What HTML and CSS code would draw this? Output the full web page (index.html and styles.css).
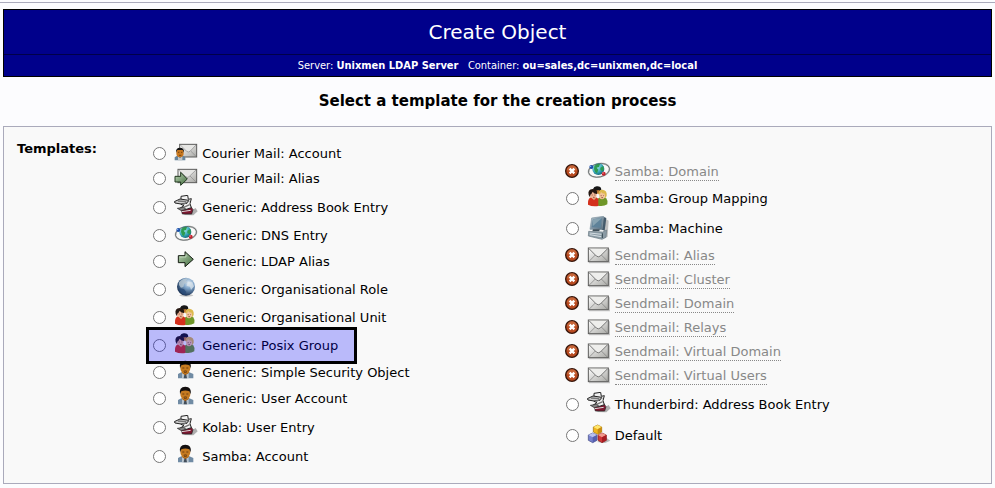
FILE: index.html
```html
<!DOCTYPE html>
<html lang="en">
<head>
  <meta charset="UTF-8" />
  <meta name="viewport" content="width=device-width, initial-scale=1.0"/>
  <title>Create Object</title>
  <link rel="stylesheet" href="styles.css">
</head>
<body>
  <!-- icon set -->
  <svg class="sprite" aria-hidden="true">
    <defs>
      <linearGradient id="paper" x1="0" y1="0" x2="1" y2="1">
        <stop offset="0" stop-color="#ffffff"/><stop offset="1" stop-color="#a8a8a4"/>
      </linearGradient>
      <linearGradient id="green" x1="0" y1="0" x2="1" y2="1">
        <stop offset="0" stop-color="#c0d8b8"/><stop offset="1" stop-color="#3f6a3c"/>
      </linearGradient>
      <radialGradient id="earth" cx=".65" cy=".3" r=".75">
        <stop offset="0" stop-color="#e4eef6"/><stop offset=".4" stop-color="#7da3c8"/><stop offset="1" stop-color="#12294c"/>
      </radialGradient>
      <radialGradient id="sea" cx=".35" cy=".3" r=".8">
        <stop offset="0" stop-color="#b8f0f8"/><stop offset=".6" stop-color="#35a5b8"/><stop offset="1" stop-color="#0c5868"/>
      </radialGradient>
      <linearGradient id="steel" x1="0" y1="0" x2="1" y2="1">
        <stop offset="0" stop-color="#b4c4ce"/><stop offset="1" stop-color="#52687a"/>
      </linearGradient>
      <filter id="soft"><feGaussianBlur stdDeviation="2"/></filter>
    </defs>

    <symbol id="mail" viewBox="0 0 72 72">
      <path d="M6 56h61V16" fill="none" stroke="#999" stroke-width="4" opacity=".5"/>
      <rect x="4" y="12" width="60" height="41" fill="url(#paper)" stroke="#5c5c5a" stroke-width="3"/>
      <path d="M7 51l19-19M61 51L42 32" fill="none" stroke="#777" stroke-width="2"/>
      <path d="M6 14l22 22q6 5 12 0l22-22" fill="#eeeeec" stroke="#777" stroke-width="3"/>
    </symbol>

    <symbol id="mail-user" viewBox="0 0 72 72">
      <rect x="17" y="10" width="51" height="38" fill="url(#paper)" stroke="#5c5c5a" stroke-width="3"/>
      <path d="M19 12l19 19q5 4 10 0l18-19M50 30l16 16" fill="#e6e6e4" stroke="#888" stroke-width="2"/>
      <path d="M2 58v-9l9-6h14l9 6v9z" fill="#66849d"/>
      <path d="M12 46l6 6 7-6v12H12z" fill="#c4c8ca"/>
      <ellipse cx="18" cy="36" rx="11" ry="13" fill="#c87820"/>
      <path d="M6 35q-1-15 12-15t12 15l-4-8H10z" fill="#111"/>
      <path d="M12 34h4m5 0h4M15 43h7" stroke="#522d09" stroke-width="2"/>
    </symbol>

    <symbol id="mail-alias" viewBox="0 0 72 72">
      <rect x="12" y="10" width="56" height="40" fill="url(#paper)" stroke="#5c5c5a" stroke-width="3"/>
      <path d="M14 12l21 20q5 4 10 0l21-20M48 30l18 18" fill="#e6e6e4" stroke="#888" stroke-width="2"/>
      <path d="M3 31h17V19l20 20-20 19V48H3z" fill="url(#green)" stroke="#223820" stroke-width="3"/>
    </symbol>

    <symbol id="contacts" viewBox="0 0 72 72">
      <path d="M28 60l30 1 13-12-6-10z" fill="#555" opacity=".45" filter="url(#soft)"/>
      <path d="M21 41l30-6 6 9-4 13-28 0z" fill="#7d1830" stroke="#222" stroke-width="2"/>
      <path d="M23 50l27-4" stroke="#ddd" stroke-width="3"/>
      <path d="M21 4l20-3 2 12 9-2-4 15 4 12-18 6-18-3 14-9-9-4z" fill="#f2f2f2" stroke="#222" stroke-width="3"/>
      <path d="M1 20l17-8 26 4-5 9-18 2-18-3z" fill="#cfcfcf" stroke="#222" stroke-width="3"/>
      <path d="M12 18l24 2M26 29l20-11M29 37l18-8" fill="none" stroke="#777" stroke-width="4"/>
      <path d="M10 40l18-3 9 6-15 4z" fill="#888" stroke="#222" stroke-width="2"/>
    </symbol>

    <symbol id="network" viewBox="0 0 72 72">
      <ellipse cx="36" cy="31" rx="32" ry="20" fill="none" stroke="#c8c8c8" stroke-width="5" transform="rotate(-12 36 31)"/>
      <circle cx="34" cy="27" r="18" fill="url(#sea)"/>
      <path d="M22 18q8-9 17-6l-3 9-7 2 5 6-4 11q-8-4-9-13zM40 23l9-5q4 9-2 16l-7-4z" fill="#2d9b51"/>
      <ellipse cx="36" cy="31" rx="32" ry="20" fill="none" stroke="#4a5252" stroke-width="2" transform="rotate(-12 36 31)"/>
      <circle cx="13" cy="21" r="6" fill="#1c4fa8"/>
      <circle cx="11" cy="19" r="2" fill="#9cc3ff"/>
      <circle cx="50" cy="41" r="6" fill="#c4232f"/>
      <circle cx="48" cy="39" r="2" fill="#ffb0b0"/>
    </symbol>

    <symbol id="arrow" viewBox="0 0 72 72">
      <path d="M13 20h20V8l25 23-25 22V41H13z" fill="url(#green)" stroke="#141c12" stroke-width="3"/>
      <path d="M17 24h19v-8" fill="none" stroke="#d5e6ce" stroke-width="2"/>
    </symbol>

    <symbol id="globe" viewBox="0 0 72 72">
      <ellipse cx="37" cy="55" rx="21" ry="4" fill="#777" opacity=".4" filter="url(#soft)"/>
      <circle cx="36" cy="29" r="27" fill="url(#earth)"/>
      <path d="M15 16q12-13 27-12l-7 8 5 5-9 3-3 10-7 2-6-8z" fill="#b9c8d2" opacity=".8"/>
      <path d="M42 14l13 2 5 12-9 11-3-10-10-3z" fill="#dce6ec" opacity=".75"/>
      <path d="M15 34l15 2 7 9-6 9q-13-6-16-20z" fill="#284b78" opacity=".8"/>
    </symbol>

    <symbol id="group" viewBox="0 0 72 72">
      <path d="M18 9q3-9 13-8 11 0 12 10L32 20z" fill="#181818"/>
      <path d="M23 14l14-2 3 11H25z" fill="#c07b33"/>
      <path d="M32 59V38l12-7 14 6q6 9 3 18-12 8-29 4z" fill="#6f9628"/>
      <path d="M3 56q-1-17 6-21l12-5 13 8v22q-18 3-31-4z" fill="#d4301c"/>
      <path d="M14 35l7 8 7-8-4-8h-6z" fill="#dd9c74"/>
      <ellipse cx="19" cy="25" rx="10" ry="13" fill="#efb595"/>
      <path d="M5 27q-4-17 12-18 16 0 13 15-9 0-13-7-3 7-7 9l-1 8z" fill="#241711"/>
      <ellipse cx="45" cy="27" rx="9" ry="13" fill="#f3c39a"/>
      <path d="M35 26q-2-15 12-15 14 2 12 18l-4 9-2-15q-8 0-11-5-1 7-7 8z" fill="#dcb84d"/>
      <path d="M14 27h3m5 0h3M41 29h3m5 0h2M18 34h5M43 35h5" stroke="#602820" stroke-width="2"/>
    </symbol>

    <symbol id="user" viewBox="0 0 72 72">
      <path d="M12 55V42l10-5h24l12 5v13z" fill="#708ba4"/>
      <path d="M24 37l10 8 10-8v18H24z" fill="#b9c4cd"/>
      <path d="M31 44h6l2 11H29z" fill="#424d59"/>
      <path d="M24 30h20v9l-10 7-10-7z" fill="#985512"/>
      <ellipse cx="34" cy="24" rx="15" ry="18" fill="#c57a20"/>
      <path d="M18 25Q14 2 34 2t16 23l-4-9q-12-5-24 0z" fill="#141010"/>
      <path d="M25 24h6m6 0h6M29 34q5-3 10 0M30 37h8" fill="none" stroke="#44230a" stroke-width="2"/>
    </symbol>

    <symbol id="machine" viewBox="0 -1 72 72">
      <path d="M56 8l9 5-3 48-15 7z" fill="#999" opacity=".6" filter="url(#soft)"/>
      <path d="M49 1l9 4-5 38-9-3z" fill="#43596a"/>
      <path d="M14 5l36-5-5 40-36-1z" fill="url(#steel)" stroke="#8195a2" stroke-width="2"/>
      <path d="M18 9l27-4-4 29-27-1z" fill="#5e8299"/>
      <path d="M18 9l27-4-28 25z" fill="#87a3b1"/>
      <path d="M18 39h20l-1 6H16z" fill="#40505a"/>
      <path d="M5 45l42 2 12-6-2 22-12 6-41-10z" fill="#8b9ba5" stroke="#6b7b85" stroke-width="2"/>
      <path d="M8 50l36 4M8 55l35 6" stroke="#d4dde2" stroke-width="3"/>
      <path d="M46 51v14" stroke="#344650" stroke-width="3"/>
    </symbol>

    <symbol id="cubes" viewBox="0 0 72 72">
      <path d="M30 57l24 3 16-7-14-10z" fill="#777" opacity=".5" filter="url(#soft)"/>
      <path d="M32 6l12 6v15l-12 7-13-7V12z" fill="#f0b51c" stroke="#966b0c" stroke-width="2"/>
      <path d="M32 6l12 6-12 7-13-7z" fill="#ffe66e"/>
      <path d="M32 19l12-7v15l-12 7z" fill="#c88b12"/>
      <path d="M17 30l13 6v16l-13 7-13-7V36z" fill="#7781ce" stroke="#3f477f" stroke-width="2"/>
      <path d="M17 30l13 6-13 7-13-7z" fill="#b9c0f0"/>
      <path d="M17 43l13-7v16l-13 7z" fill="#5660ae"/>
      <path d="M45 30l13 6v16l-13 7-12-7V36z" fill="#d03838" stroke="#781919" stroke-width="2"/>
      <path d="M45 30l13 6-13 7-12-7z" fill="#f29a8d"/>
      <path d="M45 43l13-7v16l-13 7z" fill="#a81d22"/>
    </symbol>

    <symbol id="error" viewBox="0 0 42 42">
      <circle cx="21" cy="21" r="19" fill="#b84a20" stroke="#351409" stroke-width="4"/>
      <path d="M6 19a15 15 0 0 1 30 0q-15 5-30 0z" fill="#cf7649" opacity=".6"/>
      <path d="M14 14l14 14M28 14L14 28" stroke="#fff" stroke-width="7"/>
    </symbol>
  </svg>

  <hr class="divider">

  <header class="banner">
    <h1 class="title">Create Object</h1>
    <p class="subtitle">Server: <b>Unixmen LDAP Server</b> &nbsp; Container: <b>ou=sales,dc=unixmen,dc=local</b></p>
  </header>

  <h2 class="heading">Select a template for the creation process</h2>

  <form class="panel">
    <div class="legend" id="legend">Templates:</div>

    <div class="column" role="radiogroup" aria-labelledby="legend">
      <label class="row"><input type="radio" name="template" value="courierAccount"><svg class="icon"><use href="#mail-user"/></svg><span>Courier Mail: Account</span></label>
      <label class="row row-alias"><input type="radio" name="template" value="courierAlias"><svg class="icon"><use href="#mail-alias"/></svg><span>Courier Mail: Alias</span></label>
      <label class="row row-tall"><input type="radio" name="template" value="addressBook"><svg class="icon"><use href="#contacts"/></svg><span>Generic: Address Book Entry</span></label>
      <label class="row"><input type="radio" name="template" value="dns"><svg class="icon"><use href="#network"/></svg><span>Generic: DNS Entry</span></label>
      <label class="row row-medium"><input type="radio" name="template" value="ldapAlias"><svg class="icon"><use href="#arrow"/></svg><span>Generic: LDAP Alias</span></label>
      <label class="row row-medium"><input type="radio" name="template" value="role"><svg class="icon"><use href="#globe"/></svg><span>Generic: Organisational Role</span></label>
      <label class="row row-medium"><input type="radio" name="template" value="ou"><svg class="icon"><use href="#group"/></svg><span>Generic: Organisational Unit</span></label>
      <label class="row row-medium marked"><input type="radio" name="template" value="posixGroup"><svg class="icon"><use href="#group"/></svg><span>Generic: Posix Group</span></label>
      <label class="row row-user"><input type="radio" name="template" value="simpleSecurity"><svg class="icon"><use href="#user"/></svg><span>Generic: Simple Security Object</span></label>
      <label class="row row-user"><input type="radio" name="template" value="userAccount"><svg class="icon"><use href="#user"/></svg><span>Generic: User Account</span></label>
      <label class="row row-tall"><input type="radio" name="template" value="kolab"><svg class="icon"><use href="#contacts"/></svg><span>Kolab: User Entry</span></label>
      <label class="row row-user"><input type="radio" name="template" value="sambaAccount"><svg class="icon"><use href="#user"/></svg><span>Samba: Account</span></label>
    </div>

    <div class="column" role="radiogroup" aria-labelledby="legend">
      <div class="row disabled"><svg class="error"><use href="#error"/></svg><svg class="icon"><use href="#network"/></svg><span>Samba: Domain</span></div>
      <label class="row row-medium"><input type="radio" name="template" value="sambaGroup"><svg class="icon"><use href="#group"/></svg><span>Samba: Group Mapping</span></label>
      <label class="row row-tall"><input type="radio" name="template" value="sambaMachine"><svg class="icon"><use href="#machine"/></svg><span>Samba: Machine</span></label>
      <div class="row disabled"><svg class="error"><use href="#error"/></svg><svg class="icon"><use href="#mail"/></svg><span>Sendmail: Alias</span></div>
      <div class="row disabled"><svg class="error"><use href="#error"/></svg><svg class="icon"><use href="#mail"/></svg><span>Sendmail: Cluster</span></div>
      <div class="row disabled"><svg class="error"><use href="#error"/></svg><svg class="icon"><use href="#mail"/></svg><span>Sendmail: Domain</span></div>
      <div class="row disabled"><svg class="error"><use href="#error"/></svg><svg class="icon"><use href="#mail"/></svg><span>Sendmail: Relays</span></div>
      <div class="row disabled"><svg class="error"><use href="#error"/></svg><svg class="icon"><use href="#mail"/></svg><span>Sendmail: Virtual Domain</span></div>
      <div class="row disabled"><svg class="error"><use href="#error"/></svg><svg class="icon"><use href="#mail"/></svg><span>Sendmail: Virtual Users</span></div>
      <label class="row row-tall"><input type="radio" name="template" value="thunderbird"><svg class="icon"><use href="#contacts"/></svg><span>Thunderbird: Address Book Entry</span></label>
      <label class="row row-cubes"><input type="radio" name="template" value="default"><svg class="icon"><use href="#cubes"/></svg><span>Default</span></label>
    </div>
  </form>
</body>
</html>
```

FILE: styles.css
```css
body {
  font-family: "DejaVu Sans", Verdana, sans-serif;
  font-size: 13px;
  color: #000;
  background-color: #fcfcfe;
  margin: 0;
  padding: 2px 0 3px;
}

.sprite {
  position: absolute;
  width: 0;
  height: 0;
}

.divider {
  height: 1px;
  margin: 0 0 6px;
  border: 0;
  background-color: #aaaabb;
}

.banner {
  margin: 0 3px;
  border: 1px solid #000;
  color: #fff;
  background-color: #00008b;
  text-align: center;
}

.title {
  margin: 0;
  font-size: 20px;
  font-weight: normal;
  line-height: 44px;
  border-bottom: 1px solid #000048;
}

.subtitle {
  margin: 0;
  font-family: "DejaVu Sans Condensed", "DejaVu Sans", sans-serif;
  font-size: 11px;
  line-height: 21px;
}

.heading {
  margin: 14px 0;
  font-size: 15px;
  line-height: 21px;
  text-align: center;
}

.panel {
  display: grid;
  grid-template-columns: 14% 42% 1fr;
  margin: 0 3px;
  padding: 14px 0;
  border: 1px solid #aaaabb;
  background-color: #f9f9f9;
}

.legend {
  padding-left: 13px;
  font-weight: bold;
}

.column {
  display: flex;
  flex-direction: column;
  align-items: flex-start;
  justify-content: center;
  padding-left: 11px;
}

.column + .column {
  padding-left: 9px;
}

.row {
  position: relative;
  display: flex;
  align-items: center;
  height: 24px;
}

.row-alias,
.row-user {
  height: 26px;
}

.row-medium {
  height: 28px;
}

.row-cubes {
  height: 30px;
}

.row-tall {
  height: 32px;
}

.row input {
  width: 13px;
  height: 13px;
  margin: 0 8px 0 0;
}

.icon {
  width: 24px;
  height: 24px;
  margin-right: 4px;
}

.error {
  width: 14px;
  height: 14px;
  margin: 0 8px 2px -1px;
}

.disabled span {
  color: #888;
  line-height: 17px;
  border-bottom: 1px dotted #888;
}

.marked::after {
  content: "";
  position: absolute;
  z-index: 1;
  inset: -4px -19px -5px -7px;
  border: 3px solid #000;
  background-color: rgba(0, 0, 255, 0.25);
  background-clip: padding-box;
}
```
